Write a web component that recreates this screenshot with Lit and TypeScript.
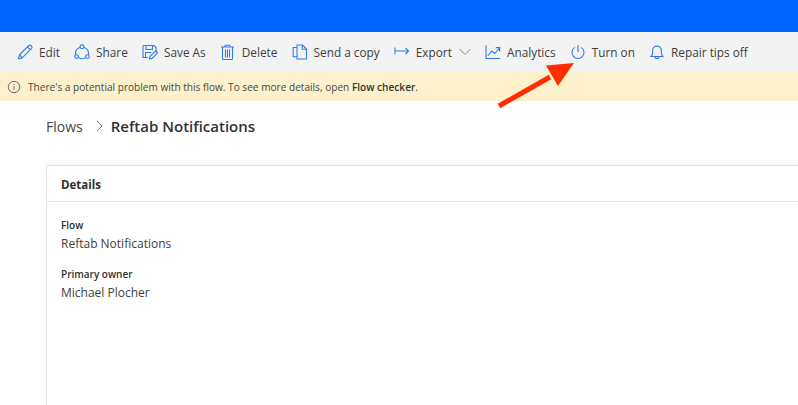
import { LitElement, html, css, svg } from "lit";
import { customElement } from "lit/decorators.js";

const ic = (b: unknown, w = 16) => html`<svg class="ic" width="${w}" height="16" viewBox="0 0 16 16" fill="none" stroke="#2f7bf0" stroke-width="1.1">${b}</svg>`;

const items = [
  { t: "Edit", i: ic(svg`<path d="M1.5 15l1-4.200L11.800 1.500a1.400 1.400 0 0 1 2 0l.8.8a1.400 1.400 0 0 1 0 2L5.300 13.800z"/><path d="M2.600 10.800l2.700 3M10.500 2.800l2.800 2.800"/>`) },
  { t: "Share", i: ic(svg`<circle cx="8" cy="2.800" r="1.900"/><circle cx="2.600" cy="12.600" r="1.900"/><circle cx="13.400" cy="12.600" r="1.900"/><path d="M5.900 3.600A6.600 6.600 0 0 0 1.600 10.800M10.100 3.600A6.600 6.600 0 0 1 14.400 10.800M4.500 13.600a6.600 6.600 0 0 0 7 0"/>`) },
  { t: "Save As", i: ic(svg`<path d="M1 1.500h11l2 2v4M1 1.500v12h5"/><path d="M4 1.500v4h6.500v-4M3.500 13V8.500h6"/><path d="M7.500 15l.6-2.600 5.600-5.600 2 2-5.600 5.600z"/>`) },
  { t: "Delete", i: ic(svg`<path d="M1 3h13M5.200 3V1.200h4.600V3M2.500 3v11.500a1 1 0 0 0 1 1h8a1 1 0 0 0 1-1V3M5.500 5.500v8M7.500 5.500v8M9.500 5.500v8"/>`) },
  { t: "Send a copy", i: ic(svg`<path d="M5 3.500H1.200v9.300H5"/><path d="M5 1h5.500L14.500 5v10H5z"/><path d="M10.300 1v4.200h4.200"/>`) },
  { t: "Export", i: ic(svg`<path d="M1 3.500v7M1 7h13.500M11.500 4l3 3-3 3"/>`), chev: true },
  { t: "Analytics", i: ic(svg`<path d="M1 1.500V14.500h14M2.800 12l4-5 3 2.500L14.500 4M10.800 3.600h3.900v3.900"/>`) },
  { t: "Turn on", i: ic(svg`<path d="M8 1v7M4.800 3.400a6 6 0 1 0 6.400 0"/>`) },
  { t: "Repair tips off", i: ic(svg`<path d="M2 12.500c1-1 1.600-2 1.600-3.600V6.500a4.400 4.400 0 0 1 8.800 0v2.400c0 1.600.6 2.600 1.600 3.600z"/><path d="M6 12.500a2 2 0 0 0 4 0"/>`) },
];

@customElement("app-root")
export class AppRoot extends LitElement {
  static styles = css`
    :host { display: block; position: relative; width: 798px; height: 405px; overflow: hidden; background: #fff;
      font-family: "Open Sans", "Noto Sans", sans-serif; color: #323130; }
    .top { height: 32px; background: #0066ff; }
    .bar { height: 40px; background: #f3f3f3; display: flex; align-items: center; padding-left: 17px; gap: 14.150px; font-size: 11.800px; color: #403e3c; }
    .item { display: flex; align-items: center; gap: 6px; white-space: nowrap; }
    .ic { display: block; flex: none; }
    .chev { margin-left: 1px; }
    .warn { height: 29px; background: #fdf1cc; display: flex; align-items: center; gap: 7px; padding-left: 7px; font-size: 10.100px; color: #4a4845; }
    .warn b { font-weight: 600; color: #323130; }
    .crumb { display: flex; align-items: center; padding: 15px 0 0 46px; height: 20px; font-size: 14px; color: #4a4845; }
    .crumb b { font-weight: 600; color: #323130; font-size: 15px; }
    .crumb svg { margin: 0 8px 0 13px; }
    .card { margin: 29px 0 0 46px; width: 800px; height: 300px; box-sizing: border-box; border: 1px solid #e3e3e3; border-radius: 2px 0 0 0; box-shadow: 0 0 3px rgba(0,0,0,.06); }
    .head { height: 36px; box-sizing: border-box; padding: 1px 0 0 14px; display: flex; align-items: center; border-bottom: 1px solid #e6e6e6; font-size: 11.500px; font-weight: 700; color: #323130; }
    .body { padding: 16px 14px 0; }
    .f { margin-bottom: 11.500px; }
    .l { font-size: 10px; font-weight: 600; line-height: 14px; color: #323130; }
    .v { font-size: 12px; line-height: 23px; color: #403e3c; }
    .arrow { position: absolute; left: 490px; top: 60px; }
  `;

  render() {
    return html`
      <div class="top"></div>
      <div class="bar">
        ${items.map(x => html`<div class="item">${x.i}<span>${x.t}</span>${x.chev ? html`<svg class="chev" width="12" height="8" viewBox="0 0 12 8" fill="none" stroke="#8a8886"><path d="M.5 1l5.500 5.500L11.500 1"/></svg>` : ""}</div>`)}
      </div>
      <div class="warn">
        <svg width="14" height="14" viewBox="0 0 14 14" fill="none" stroke="#6f6d6a"><circle cx="7" cy="7" r="5.700"/><path d="M7 6v4M7 4v1"/></svg>
        <span>There's a potential problem with this flow. To see more details, open <b>Flow checker</b>.</span>
      </div>
      <div class="crumb">Flows<svg width="7" height="12" viewBox="0 0 7 12" fill="none" stroke="#8a8886"><path d="M1 1l5 5-5 5"/></svg><b>Reftab Notifications</b></div>
      <div class="card">
        <div class="head">Details</div>
        <div class="body">
          <div class="f"><div class="l">Flow</div><div class="v">Reftab Notifications</div></div>
          <div class="f"><div class="l">Primary owner</div><div class="v">Michael Plocher</div></div>
        </div>
      </div>
      <svg class="arrow" width="100" height="60" viewBox="0 0 100 60"><path d="M9 46L60 17" stroke="#ff2e00" stroke-width="5" fill="none"/><path d="M56 5.500L84 3 68 26z" fill="#ff2e00"/></svg>
    `;
  }
}
